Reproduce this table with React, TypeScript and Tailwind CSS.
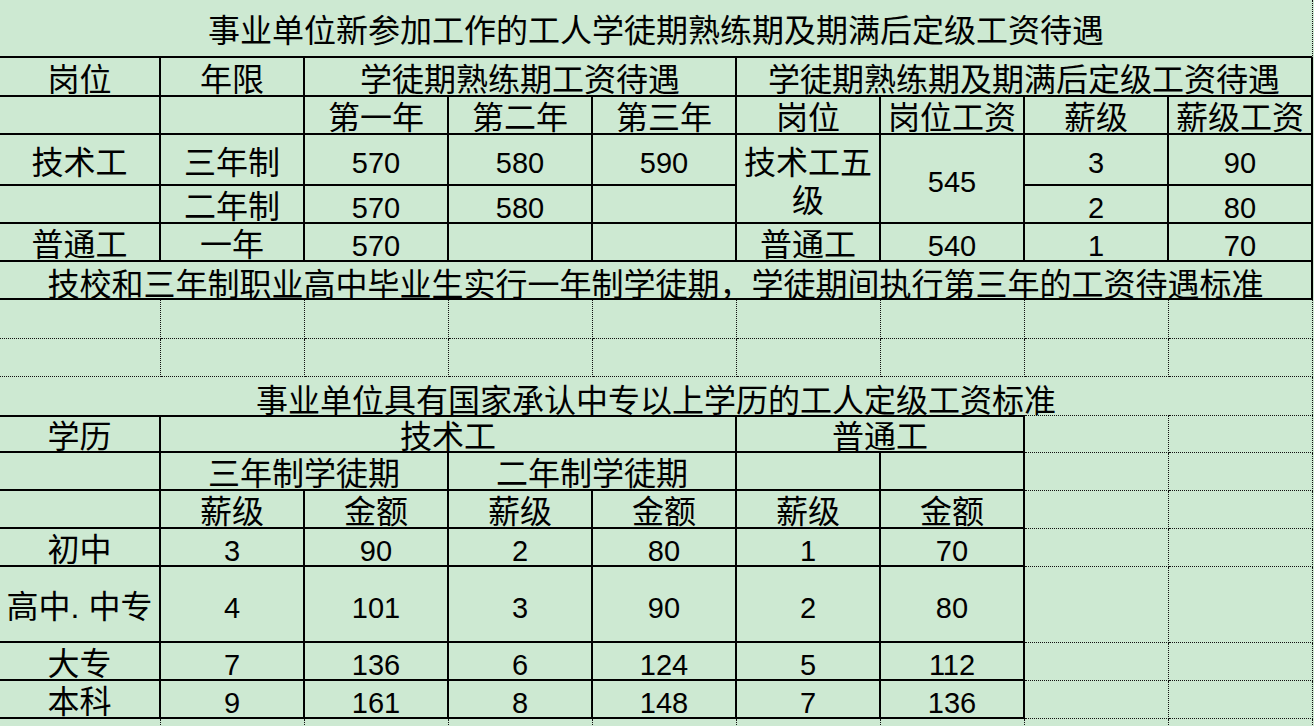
import type { ReactNode } from "react";
import { clsx } from "clsx";
import { twMerge } from "tailwind-merge";

// 엑셀 스크린샷 — 학도기/숙련기 임금표
const cn = (...a: (string | false | undefined)[]) => twMerge(clsx(a));

const SOLID = "border-r-2 border-b-2 border-black";
const DOT = "border-r border-b border-dotted border-[#111]";
const TXT = "flex items-center justify-center text-center pt-[6px] text-[32px] leading-none";
const NUM = "flex items-center justify-center pt-[8px] text-[29px] leading-none";

type P = { children?: ReactNode; className?: string };

// 글자 셀
function C({ children, className }: P) {
  return <div className={cn(SOLID, TXT, className)}>{children}</div>;
}

// 숫자 셀
function N({ children, className }: P) {
  return <div className={cn(SOLID, NUM, className)}>{children}</div>;
}

// 빈 점선 셀
function D({ className }: P) {
  return <div className={cn(DOT, className)} />;
}

const rows = [
  ["初中", "3", "90", "2", "80", "1", "70"],
  ["高中. 中专", "4", "101", "3", "90", "2", "80"],
  ["大专", "7", "136", "6", "124", "5", "112"],
  ["本科", "9", "161", "8", "148", "7", "136"],
];

export default function App() {
  return (
    <div className="w-[1314px] h-[726px] overflow-hidden bg-[#cde9d2] text-black font-['Liberation_Sans','Noto_Sans_CJK_SC',sans-serif]">
      <div className="grid grid-cols-[161px_repeat(8,144px)] grid-rows-[58px_39px_38px_51px_38px_38px_38px_39px_38px_38px_38px_38px_38px_38px_76px_38px_38px_38px]">
        {/* 제목 1 */}
        <div
          className={cn(
            TXT,
            "col-span-9 border-b-2 border-b-black border-r border-r-[#111] [border-right-style:dotted]",
          )}
        >
          事业单位新参加工作的工人学徒期熟练期及期满后定级工资待遇
        </div>

        {/* 헤더 */}
        <C>岗位</C>
        <C>年限</C>
        <C className="col-span-3">学徒期熟练期工资待遇</C>
        <C className="col-span-4">学徒期熟练期及期满后定级工资待遇</C>

        <C />
        <C />
        <C>第一年</C>
        <C>第二年</C>
        <C>第三年</C>
        <C>岗位</C>
        <C>岗位工资</C>
        <C>薪级</C>
        <C>薪级工资</C>

        <C>技术工</C>
        <C>三年制</C>
        <N>570</N>
        <N>580</N>
        <N>590</N>
        <C className="row-span-2 leading-[38px]">技术工五级</C>
        <N className="row-span-2">545</N>
        <N>3</N>
        <N>90</N>

        <C />
        <C>二年制</C>
        <N>570</N>
        <N>580</N>
        <C />
        <N>2</N>
        <N>80</N>

        <C>普通工</C>
        <C>一年</C>
        <N>570</N>
        <C />
        <C />
        <C>普通工</C>
        <N>540</N>
        <N>1</N>
        <N>70</N>

        <C className="col-span-9 pt-[10px]">
          技校和三年制职业高中毕业生实行一年制学徒期，学徒期间执行第三年的工资待遇标准
        </C>

        {Array.from({ length: 18 }).map((_, i) => (
          <D key={i} />
        ))}

        {/* 제목 2 */}
        <div
          className={cn(
            TXT,
            "col-span-9 pt-[10px] border-r border-r-[#111] [border-right-style:dotted]",
          )}
        >
          事业单位具有国家承认中专以上学历的工人定级工资标准
        </div>

        <C className="border-t-2 border-t-black">学历</C>
        <C className="col-span-4 border-t-2 border-t-black">技术工</C>
        <C className="col-span-2 border-t-2 border-t-black">普通工</C>
        <D className="border-t" />
        <D className="border-t" />

        <C />
        <C className="col-span-2">三年制学徒期</C>
        <C className="col-span-2">二年制学徒期</C>
        <C />
        <C />
        <D />
        <D />

        <C />
        <C>薪级</C>
        <C>金额</C>
        <C>薪级</C>
        <C>金额</C>
        <C>薪级</C>
        <C>金额</C>
        <D />
        <D />

        {rows.map((r) => (
          <div key={r[0]} className="contents">
            <C>{r[0]}</C>
            {r.slice(1).map((v, j) => (
              <N key={j}>{v}</N>
            ))}
            <D />
            <D />
          </div>
        ))}

        {Array.from({ length: 9 }).map((_, i) => (
          <D key={"z" + i} />
        ))}
      </div>
    </div>
  );
}
